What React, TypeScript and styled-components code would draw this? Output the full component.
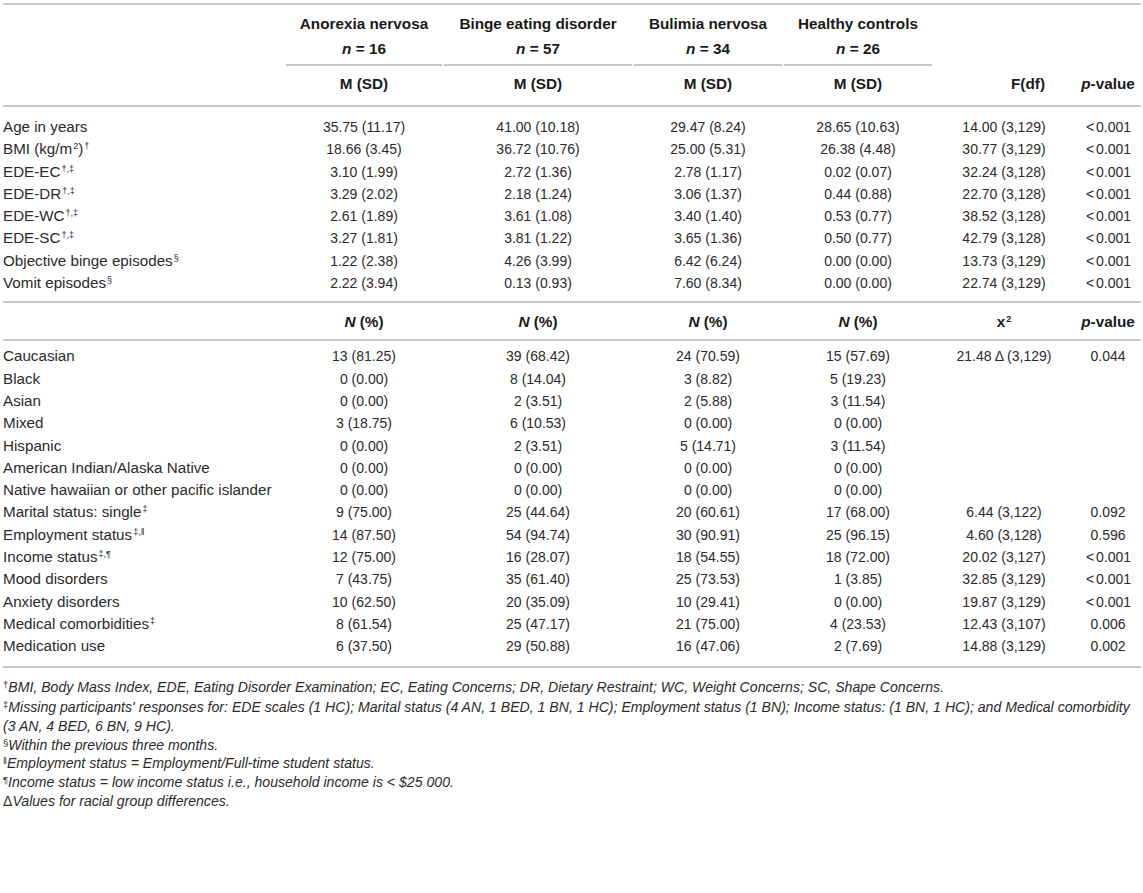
import React from "react";
import styled, { createGlobalStyle } from "styled-components";

const Global = createGlobalStyle`
  html, body { margin: 0; padding: 0; background: #ffffff; }
  body { font-family: "Liberation Sans", Arial, Helvetica, sans-serif; color: #2b2b2b; }
`;

const Page = styled.div`
  padding: 3px 2px 0 3px;
  width: 1138px;
`;

const Table = styled.table`
  width: 1138px;
  border-collapse: collapse;
  table-layout: fixed;
  font-size: 14px;
  border-top: 2px solid #c6c6c6;
`;

const Col = styled.col<{ $w: number }>`
  width: ${(p) => p.$w}px;
`;

const HeadCell = styled.th<{ $pt: number; $pb: number; $shift?: number }>`
  font-weight: bold;
  font-size: 15.3px;
  color: #1a1a1a;
  text-align: center;
  line-height: 20px;
  padding: ${(p) => p.$pt}px 0 ${(p) => p.$pb}px ${(p) => p.$shift ?? 0}px;
  white-space: nowrap;
`;

const GroupLine = styled.div`
  margin: 0 1px;
  border-bottom: 2px solid #c6c6c6;
  padding-bottom: 5px;
`;

const RuleRow = styled.tr`
  border-bottom: 2px solid #c6c6c6;
`;

const Cell = styled.td<{ $left?: boolean; $pt?: number; $pb?: number }>`
  text-align: ${(p) => (p.$left ? "left" : "center")};
  font-size: ${(p) => (p.$left ? "15.2px" : "14px")};
  line-height: 22.3px;
  padding: ${(p) => p.$pt ?? 0}px 0 ${(p) => p.$pb ?? 0}px 0;
  white-space: nowrap;
  color: #2b2b2b;
`;

const Less = styled.span`
  padding: 0 2px 0 1px;
`;

const Sup = styled.sup`
  font-size: 9px;
  line-height: 0;
  vertical-align: 5px;
  margin-left: 1px;
`;

const Notes = styled.div`
  font-size: 14.1px;
  font-style: italic;
  line-height: 18.7px;
  color: #2b2b2b;
  padding-top: 10px;
  width: 1138px;
`;

const Note = styled.div<{ $gap?: number }>`
  margin-bottom: ${(p) => p.$gap ?? 0}px;
`;

const NoteMark = styled.span`
  font-size: 9.5px;
  vertical-align: 4px;
  line-height: 0;
  font-style: normal;
`;

const Delta = styled.span`
  font-style: normal;
`;

type Row = { label: React.ReactNode; vals: string[]; stat?: string; p?: string };

const contRows: Row[] = [
  { label: "Age in years", vals: ["35.75 (11.17)", "41.00 (10.18)", "29.47 (8.24)", "28.65 (10.63)"], stat: "14.00 (3,129)", p: "<0.001" },
  { label: <>BMI (kg/m<Sup>2</Sup>)<Sup>†</Sup></>, vals: ["18.66 (3.45)", "36.72 (10.76)", "25.00 (5.31)", "26.38 (4.48)"], stat: "30.77 (3,129)", p: "<0.001" },
  { label: <>EDE-EC<Sup>†,‡</Sup></>, vals: ["3.10 (1.99)", "2.72 (1.36)", "2.78 (1.17)", "0.02 (0.07)"], stat: "32.24 (3,128)", p: "<0.001" },
  { label: <>EDE-DR<Sup>†,‡</Sup></>, vals: ["3.29 (2.02)", "2.18 (1.24)", "3.06 (1.37)", "0.44 (0.88)"], stat: "22.70 (3,128)", p: "<0.001" },
  { label: <>EDE-WC<Sup>†,‡</Sup></>, vals: ["2.61 (1.89)", "3.61 (1.08)", "3.40 (1.40)", "0.53 (0.77)"], stat: "38.52 (3,128)", p: "<0.001" },
  { label: <>EDE-SC<Sup>†,‡</Sup></>, vals: ["3.27 (1.81)", "3.81 (1.22)", "3.65 (1.36)", "0.50 (0.77)"], stat: "42.79 (3,128)", p: "<0.001" },
  { label: <>Objective binge episodes<Sup>§</Sup></>, vals: ["1.22 (2.38)", "4.26 (3.99)", "6.42 (6.24)", "0.00 (0.00)"], stat: "13.73 (3,129)", p: "<0.001" },
  { label: <>Vomit episodes<Sup>§</Sup></>, vals: ["2.22 (3.94)", "0.13 (0.93)", "7.60 (8.34)", "0.00 (0.00)"], stat: "22.74 (3,129)", p: "<0.001" },
];

const catRows: Row[] = [
  { label: "Caucasian", vals: ["13 (81.25)", "39 (68.42)", "24 (70.59)", "15 (57.69)"], stat: "21.48 Δ (3,129)", p: "0.044" },
  { label: "Black", vals: ["0 (0.00)", "8 (14.04)", "3 (8.82)", "5 (19.23)"] },
  { label: "Asian", vals: ["0 (0.00)", "2 (3.51)", "2 (5.88)", "3 (11.54)"] },
  { label: "Mixed", vals: ["3 (18.75)", "6 (10.53)", "0 (0.00)", "0 (0.00)"] },
  { label: "Hispanic", vals: ["0 (0.00)", "2 (3.51)", "5 (14.71)", "3 (11.54)"] },
  { label: "American Indian/Alaska Native", vals: ["0 (0.00)", "0 (0.00)", "0 (0.00)", "0 (0.00)"] },
  { label: "Native hawaiian or other pacific islander", vals: ["0 (0.00)", "0 (0.00)", "0 (0.00)", "0 (0.00)"] },
  { label: <>Marital status: single<Sup>‡</Sup></>, vals: ["9 (75.00)", "25 (44.64)", "20 (60.61)", "17 (68.00)"], stat: "6.44 (3,122)", p: "0.092" },
  { label: <>Employment status<Sup>‡,‖</Sup></>, vals: ["14 (87.50)", "54 (94.74)", "30 (90.91)", "25 (96.15)"], stat: "4.60 (3,128)", p: "0.596" },
  { label: <>Income status<Sup>‡,¶</Sup></>, vals: ["12 (75.00)", "16 (28.07)", "18 (54.55)", "18 (72.00)"], stat: "20.02 (3,127)", p: "<0.001" },
  { label: "Mood disorders", vals: ["7 (43.75)", "35 (61.40)", "25 (73.53)", "1 (3.85)"], stat: "32.85 (3,129)", p: "<0.001" },
  { label: "Anxiety disorders", vals: ["10 (62.50)", "20 (35.09)", "10 (29.41)", "0 (0.00)"], stat: "19.87 (3,129)", p: "<0.001" },
  { label: <>Medical comorbidities<Sup>‡</Sup></>, vals: ["8 (61.54)", "25 (47.17)", "21 (75.00)", "4 (23.53)"], stat: "12.43 (3,107)", p: "0.006" },
  { label: "Medication use", vals: ["6 (37.50)", "29 (50.88)", "16 (47.06)", "2 (7.69)"], stat: "14.88 (3,129)", p: "0.002" },
];

const groups = [
  { name: "Anorexia nervosa", n: "16" },
  { name: "Binge eating disorder", n: "57" },
  { name: "Bulimia nervosa", n: "34" },
  { name: "Healthy controls", n: "26" },
];

function PValue({ v }: { v?: string }) {
  if (!v) return null;
  if (v.startsWith("<")) {
    return (
      <>
        <Less>&lt;</Less>
        {v.slice(1)}
      </>
    );
  }
  return <>{v}</>;
}

function DataRows({ rows, first, last }: { rows: Row[]; first: number; last: number }) {
  return (
    <>
      {rows.map((r, i) => {
        const pt = i === 0 ? first : 0;
        const pb = i === rows.length - 1 ? last : 0;
        const Tr = i === rows.length - 1 ? RuleRow : "tr";
        return (
          <Tr key={i}>
            <Cell $left $pt={pt} $pb={pb}>{r.label}</Cell>
            {r.vals.map((v, j) => (
              <Cell key={j} $pt={pt} $pb={pb}>{v}</Cell>
            ))}
            <Cell $pt={pt} $pb={pb}>{r.stat ?? ""}</Cell>
            <Cell $pt={pt} $pb={pb}>
              <PValue v={r.p} />
            </Cell>
          </Tr>
        );
      })}
    </>
  );
}

export default function App() {
  return (
    <Page>
      <Global />
      <Table>
        <colgroup>
          <Col $w={282} />
          <Col $w={158} />
          <Col $w={190} />
          <Col $w={150} />
          <Col $w={150} />
          <Col $w={142} />
          <Col $w={66} />
        </colgroup>
        <thead>
          <tr>
            <HeadCell $pt={9} $pb={2} />
            {groups.map((g) => (
              <HeadCell key={g.name} $pt={9} $pb={2}>{g.name}</HeadCell>
            ))}
            <HeadCell $pt={9} $pb={2} />
            <HeadCell $pt={9} $pb={2} />
          </tr>
          <tr>
            <HeadCell $pt={3} $pb={0} />
            {groups.map((g) => (
              <HeadCell key={g.name} $pt={3} $pb={0}>
                <GroupLine>
                  <i>n</i> = {g.n}
                </GroupLine>
              </HeadCell>
            ))}
            <HeadCell $pt={3} $pb={0} />
            <HeadCell $pt={3} $pb={0} />
          </tr>
          <RuleRow>
            <HeadCell $pt={8} $pb={11} />
            {groups.map((g) => (
              <HeadCell key={g.name} $pt={8} $pb={11}>M (SD)</HeadCell>
            ))}
            <HeadCell $pt={8} $pb={11} $shift={48}>F(df)</HeadCell>
            <HeadCell $pt={8} $pb={11}><i>p</i>-value</HeadCell>
          </RuleRow>
        </thead>
        <tbody>
          <DataRows rows={contRows} first={9} last={7} />
          <RuleRow>
            <HeadCell $pt={9} $pb={7} />
            {groups.map((g) => (
              <HeadCell key={g.name} $pt={9} $pb={7}><i>N</i> (%)</HeadCell>
            ))}
            <HeadCell $pt={9} $pb={7}>x<Sup>2</Sup></HeadCell>
            <HeadCell $pt={9} $pb={7}><i>p</i>-value</HeadCell>
          </RuleRow>
          <DataRows rows={catRows} first={4} last={8} />
        </tbody>
      </Table>
      <Notes>
        <Note $gap={2}><NoteMark>†</NoteMark>BMI, Body Mass Index, EDE, Eating Disorder Examination; EC, Eating Concerns; DR, Dietary Restraint; WC, Weight Concerns; SC, Shape Concerns.</Note>
        <Note><NoteMark>‡</NoteMark>Missing participants' responses for: EDE scales (1 HC); Marital status (4 AN, 1 BED, 1 BN, 1 HC); Employment status (1 BN); Income status: (1 BN, 1 HC); and Medical comorbidity (3 AN, 4 BED, 6 BN, 9 HC).</Note>
        <Note><NoteMark>§</NoteMark>Within the previous three months.</Note>
        <Note><NoteMark>‖</NoteMark>Employment status = Employment/Full-time student status.</Note>
        <Note><NoteMark>¶</NoteMark>Income status = low income status i.e., household income is &lt; $25 000.</Note>
        <Note><Delta>Δ</Delta>Values for racial group differences.</Note>
      </Notes>
    </Page>
  );
}
